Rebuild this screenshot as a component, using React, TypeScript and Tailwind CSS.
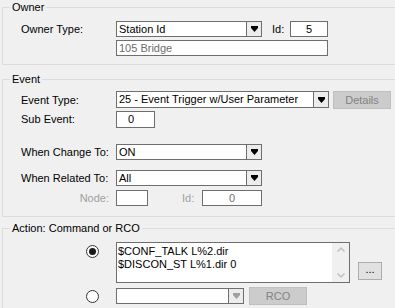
import type { ReactNode } from 'react';

const FONT = "font-['Liberation_Sans',Arial,sans-serif] text-[11px] text-black";

function Arrow({ disabled }: { disabled?: boolean }) {
    return (
        <svg width="7" height="6" viewBox="0 0 7 6" className={disabled ? 'text-[#a0a0a0]' : 'text-black'}>
            <rect x="0" y="0" width="7" height="2" fill="currentColor" />
            <polygon points="0,2 7,2 3.5,6" fill="currentColor" />
        </svg>
    );
}

function Combo({ value, width, height = 16, disabled }: { value: string; width: number; height?: number; disabled?: boolean }) {
    return (
        <div
            className="flex shrink-0 border border-[#6e6e6e] bg-white"
            style={{ width, height }}
        >
            <div className="flex-1 pl-[2px] leading-none flex items-center overflow-hidden whitespace-nowrap">{value}</div>
            <div className="w-[15px] border-l border-[#6e6e6e] bg-[#ececec] flex items-center justify-center">
                <Arrow disabled={disabled} />
            </div>
        </div>
    );
}

function Box({ value, width, height = 16, className = '' }: { value?: string; width: number; height?: number; className?: string }) {
    return (
        <div
            className={`flex shrink-0 items-center border border-[#6e6e6e] bg-white leading-none whitespace-nowrap ${className}`}
            style={{ width, height }}
        >
            {value}
        </div>
    );
}

function Btn({ label, width, height = 18 }: { label: string; width: number; height?: number }) {
    return (
        <div
            className="flex shrink-0 items-center justify-center border border-[#bfbfbf] bg-[#cccccc] text-[#838383] leading-none"
            style={{ width, height }}
        >
            {label}
        </div>
    );
}

function Group({ title, className = '', children }: { title: string; className?: string; children: ReactNode }) {
    return (
        <fieldset className={`w-[400px] border border-[#dcdcdc] ${className}`}>
            <legend className="ml-[7px] px-[2px] leading-[14px]">{title}</legend>
            {children}
        </fieldset>
    );
}

function Label({ children, className = '' }: { children: ReactNode; className?: string }) {
    return <div className={`w-[95px] shrink-0 leading-none ${className}`}>{children}</div>;
}

function Radio({ checked }: { checked?: boolean }) {
    return (
        <div className="w-[13px] h-[13px] shrink-0 rounded-full border border-[#333333] bg-white flex items-center justify-center">
            {checked && <div className="w-[7px] h-[7px] rounded-full bg-[#1a1a1a]" />}
        </div>
    );
}

export default function App() {
    return (
        <div className={`w-[395px] h-[308px] overflow-hidden bg-[#f0f0f0] pl-[2px] ${FONT}`}>
            {/* Owner */}
            <Group title="Owner" className="pt-[7px] pb-[8px]">
                <div className="flex items-center h-[16px] pl-[18px]">
                    <Label>Owner Type:</Label>
                    <Combo value="Station Id" width={146} />
                    <div className="ml-[10px] w-[18px] leading-none">Id:</div>
                    <Box value="5" width={38} className="justify-center" />
                </div>
                <div className="flex items-center h-[16px] mt-[3px] pl-[18px]">
                    <Label>{''}</Label>
                    <Box value="105 Bridge" width={212} className="pl-[2px] text-[#6d6d6d]" />
                </div>
            </Group>

            {/* Event */}
            <Group title="Event" className="mt-[7px] pt-[5px] pb-[10px]">
                <div className="flex items-start h-[18px] pl-[18px]">
                    <Label className="self-center">Event Type:</Label>
                    <Combo value="25 - Event Trigger w/User Parameter" width={213} height={17} />
                    <div className="ml-[4px]">
                        <Btn label="Details" width={58} />
                    </div>
                </div>
                <div className="flex items-center h-[17px] mt-[2px] pl-[18px]">
                    <Label>Sub Event:</Label>
                    <Box value="0" width={39} height={17} className="pl-[11px]" />
                </div>
                <div className="flex items-center h-[16px] mt-[16px] pl-[18px]">
                    <Label>When Change To:</Label>
                    <Combo value="ON" width={146} />
                </div>
                <div className="flex items-center h-[16px] mt-[10px] pl-[18px]">
                    <Label>When Related To:</Label>
                    <Combo value="All" width={146} />
                </div>
                <div className="flex items-center h-[16px] mt-[4px] pl-[18px]">
                    <Label className="text-right pr-[7px] text-[#a0a0a0]">Node:</Label>
                    <Box width={32} />
                    <div className="ml-[34px] w-[20px] leading-none text-[#a0a0a0]">Id:</div>
                    <Box value="0" width={60} className="justify-center text-[#6d6d6d]" />
                </div>
            </Group>

            {/* Action */}
            <Group title="Action: Command or RCO" className="mt-[4px] pt-[7px] pb-[10px]">
                <div className="flex items-start pl-[83px]">
                    <div className="mt-[3px]">
                        <Radio checked />
                    </div>
                    <div className="ml-[17px] flex w-[234px] h-[41px] shrink-0 border border-[#6e6e6e] bg-white">
                        <div className="flex-1 pl-[1px] pt-[2px] leading-[13px] whitespace-pre">
                            {'$CONF_TALK L%2.dir\n$DISCON_ST L%1.dir 0'}
                        </div>
                        <div className="w-[17px] bg-[#f0f0f0] flex flex-col items-center justify-between py-[4px]">
                            <svg width="8" height="5" viewBox="0 0 8 5">
                                <path d="M0.5 4.5 L4 1 L7.5 4.5" fill="none" stroke="#c0c0c0" strokeWidth="1.5" />
                            </svg>
                            <svg width="8" height="5" viewBox="0 0 8 5">
                                <path d="M0.5 0.5 L4 4 L7.5 0.5" fill="none" stroke="#c0c0c0" strokeWidth="1.5" />
                            </svg>
                        </div>
                    </div>
                    <div className="ml-[8px] mt-[20px]">
                        <div className="flex w-[24px] h-[18px] items-center justify-center border border-[#adadad] bg-[#e1e1e1] leading-none pb-[3px]">
                            ...
                        </div>
                    </div>
                </div>
                <div className="flex items-center mt-[4px] pl-[83px]">
                    <Radio />
                    <div className="ml-[17px]">
                        <Combo value="" width={128} disabled />
                    </div>
                    <div className="ml-[5px]">
                        <Btn label="RCO" width={58} />
                    </div>
                </div>
            </Group>
        </div>
    );
}
